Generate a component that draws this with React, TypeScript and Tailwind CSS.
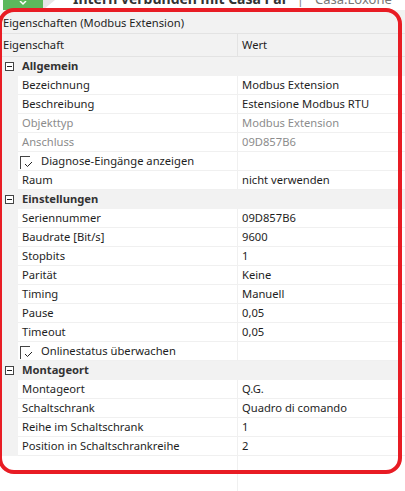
import React from 'react';

type Row =
  | { kind: 'section'; label: string }
  | { kind: 'item'; label: string; value?: string; disabled?: boolean; check?: boolean };

const rows: Row[] = [
  { kind: 'section', label: 'Allgemein' },
  { kind: 'item', label: 'Bezeichnung', value: 'Modbus Extension' },
  { kind: 'item', label: 'Beschreibung', value: 'Estensione Modbus RTU' },
  { kind: 'item', label: 'Objekttyp', value: 'Modbus Extension', disabled: true },
  { kind: 'item', label: 'Anschluss', value: '09D857B6', disabled: true },
  { kind: 'item', label: 'Diagnose-Eingänge anzeigen', check: true },
  { kind: 'item', label: 'Raum', value: 'nicht verwenden' },
  { kind: 'section', label: 'Einstellungen' },
  { kind: 'item', label: 'Seriennummer', value: '09D857B6' },
  { kind: 'item', label: 'Baudrate [Bit/s]', value: '9600' },
  { kind: 'item', label: 'Stopbits', value: '1' },
  { kind: 'item', label: 'Parität', value: 'Keine' },
  { kind: 'item', label: 'Timing', value: 'Manuell' },
  { kind: 'item', label: 'Pause', value: '0,05' },
  { kind: 'item', label: 'Timeout', value: '0,05' },
  { kind: 'item', label: 'Onlinestatus überwachen', check: true },
  { kind: 'section', label: 'Montageort' },
  { kind: 'item', label: 'Montageort', value: 'Q.G.' },
  { kind: 'item', label: 'Schaltschrank', value: 'Quadro di comando' },
  { kind: 'item', label: 'Reihe im Schaltschrank', value: '1' },
  { kind: 'item', label: 'Position in Schaltschrankreihe', value: '2' },
];

function Collapse() {
  return (
    <div className="w-[9px] h-[9px] border border-[#444] flex items-center justify-center bg-white">
      <div className="w-[5px] h-px bg-[#222]" />
    </div>
  );
}

function Check() {
  return (
    <div className="relative w-[10px] h-[13px] border-l border-t border-[#444]">
      <svg className="absolute left-[3px] top-[4px]" width="9" height="7" viewBox="0 0 9 7">
        <path d="M1 3 L3.5 5.5 L8 1" fill="none" stroke="#222" strokeWidth="1" />
      </svg>
    </div>
  );
}

export default function App() {
  return (
    <div className="relative w-[405px] h-[491px] overflow-hidden bg-white text-[11.2px] text-[#1e1e1e]" style={{ fontFamily: '"Noto Sans", "Open Sans", sans-serif' }}>
      {/* top app bar, cropped */}
      <div className="relative h-[10px] overflow-hidden bg-white">
        <div className="absolute left-[3px] top-0 w-[40px] h-[10px] bg-[#5cb85c]" />
        <div className="absolute left-[43px] top-0 w-[12px] h-[10px] bg-[#e6e6e6] [clip-path:polygon(0_0,100%_0,0_100%)]" />
        <svg className="absolute left-[19px] top-[1px]" width="8" height="5" viewBox="0 0 8 5">
          <path d="M1 0 L4 3 L7 0" fill="none" stroke="#fff" strokeWidth="1.5" />
        </svg>
        <div className="absolute left-[73px] top-[-8px] flex items-baseline gap-[11px] whitespace-nowrap leading-none">
          <span className="text-[14px] font-bold text-[#333]">Intern verbunden mit Casa Pal</span>
          <span className="text-[13px] text-[#888]">|</span>
          <span className="text-[13px] text-[#777]">Casa.Loxone</span>
          <span className="text-[13px] text-[#888]">|</span>
          <span className="text-[13px] text-[#777]">Prog</span>
        </div>
      </div>

      {/* properties panel */}
      <div className="bg-[#f2f2f2]">
        <div className="h-[23px] pl-[3px] flex items-center pt-[3px]">Eigenschaften (Modbus Extension)</div>
        <div className="h-[24px] flex border-t border-b border-[#e3e3e3]">
          <div className="w-[238px] pl-[3px] flex items-center border-r border-[#e3e3e3]">Eigenschaft</div>
          <div className="flex-1 pl-[4px] flex items-center">Wert</div>
        </div>
      </div>

      <div className="flex flex-col">
        {rows.map((r, i) =>
          r.kind === 'section' ? (
            <div key={i} className="h-[19px] flex items-center bg-[#f2f2f2]">
              <div className="w-[18px] flex justify-center">
                <Collapse />
              </div>
              <span className="pl-[4px] font-bold text-[#333]">{r.label}</span>
            </div>
          ) : (
            <div key={i} className="h-[19px] flex">
              <div className="w-[18px] bg-[#f2f2f2] shrink-0" />
              <div className="w-[220px] flex items-center border-b border-r border-[#f0f0f0] pl-[4px] bg-white">
                {r.check ? (
                  <div className="flex items-center">
                    <div className="ml-[-2px] mt-[3px]">
                      <Check />
                    </div>
                    <span className="ml-[11px]">{r.label}</span>
                  </div>
                ) : (
                  <span className={r.disabled ? 'text-[#8c8c8c]' : ''}>{r.label}</span>
                )}
              </div>
              <div className={`flex-1 flex items-center border-b border-[#f0f0f0] pl-[4px] bg-white ${r.disabled ? 'text-[#8c8c8c]' : ''}`}>
                {r.value}
              </div>
            </div>
          )
        )}
        <div className="flex h-[40px]">
          <div className="w-[238px] border-r border-[#f0f0f0]" />
        </div>
      </div>

      {/* red annotation */}
      <div className="absolute left-[-2px] top-[8px] w-[404px] h-[466px] border-[4px] border-[#e81c24] rounded-[16px] pointer-events-none" />
    </div>
  );
}
